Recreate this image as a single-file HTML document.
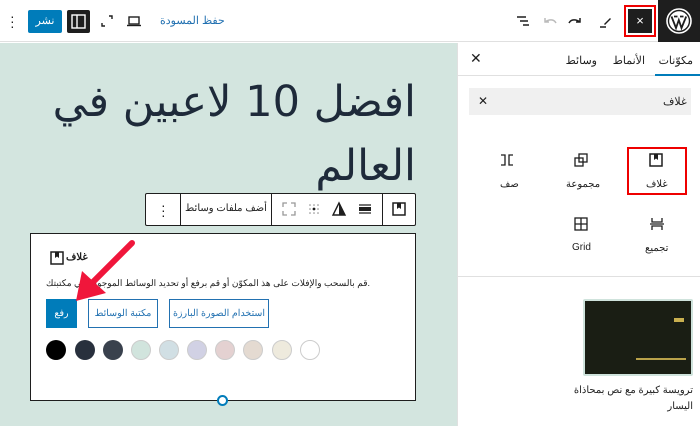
<!DOCTYPE html>
<html><head><meta charset="utf-8"><style>
*{margin:0;padding:0;box-sizing:border-box}
body{width:700px;height:426px;overflow:hidden;background:#fff;font-family:"Liberation Sans","Noto Sans CJK SC",sans-serif;position:relative;color:#1e1e1e}
.a{position:absolute}
.t{font-size:11px;white-space:nowrap;direction:rtl}
.sw{position:absolute;top:340px;width:20px;height:20px;border-radius:50%}
</style></head><body>
<!-- header -->
<div class="a" style="left:0;top:0;width:700px;height:42px;border-bottom:1px solid #e0e0e0;background:#fff"></div>
<div class="a" style="left:658px;top:0;width:42px;height:42px;background:#1e1e1e"></div>
<svg class="a" style="left:665px;top:7px" width="28" height="28" viewBox="0 0 28 28"><circle cx="14" cy="14" r="12" fill="none" stroke="#fff" stroke-width="1.6"/><circle cx="14" cy="14" r="9.8" fill="#fff"/><path d="M6.5 9.5 L11 21 L13.8 13 L16.5 21 L21.2 9.5 M9 9.5h3.5 M15 9.5h3.5" stroke="#1e1e1e" stroke-width="1.8" fill="none"/></svg>
<div class="a" style="left:624px;top:5px;width:32px;height:32px;border:2px solid #e00"></div>
<div class="a" style="left:628px;top:9px;width:24px;height:24px;background:#1e1e1e;color:#fff;font-size:13px;text-align:center;line-height:24px">×</div>
<svg class="a" style="left:596px;top:12px" width="18" height="18" viewBox="0 0 18 18"><path d="M4 15h6" stroke="#1e1e1e" stroke-width="1.5"/><path d="M8 12l6-6 1 1-6 6z" fill="#1e1e1e"/></svg>
<svg class="a" style="left:566px;top:12px" width="18" height="18" viewBox="0 0 18 18"><path d="M3 11c2-4 7-4 11-1M14 6v4h-4" stroke="#1e1e1e" stroke-width="1.5" fill="none"/></svg>
<svg class="a" style="left:541px;top:12px" width="18" height="18" viewBox="0 0 18 18"><path d="M15 11c-2-4-7-4-11-1M4 6v4h4" stroke="#bbb" stroke-width="1.5" fill="none"/></svg>
<svg class="a" style="left:514px;top:12px" width="18" height="18" viewBox="0 0 18 18"><path d="M3 5h9M6 9h8M9 13h6" stroke="#1e1e1e" stroke-width="1.5"/></svg>
<div class="a t" style="left:160px;top:14px;color:#2271b1">حفظ المسودة</div>
<svg class="a" style="left:126px;top:13px" width="16" height="16" viewBox="0 0 16 16"><rect x="3" y="4" width="10" height="7" fill="none" stroke="#1e1e1e" stroke-width="1.4"/><path d="M1 12.5h14" stroke="#1e1e1e" stroke-width="1.4"/></svg>
<svg class="a" style="left:99px;top:13px" width="16" height="16" viewBox="0 0 16 16"><path d="M10 3h3v3M6 13H3v-3" stroke="#1e1e1e" stroke-width="1.4" fill="none"/></svg>
<div class="a" style="left:67px;top:10px;width:23px;height:23px;background:#1e1e1e;border-radius:2px"></div>
<svg class="a" style="left:71px;top:14px" width="15" height="15" viewBox="0 0 15 15"><rect x="1" y="1" width="13" height="13" fill="none" stroke="#fff" stroke-width="1.4"/><path d="M6 1v13" stroke="#fff" stroke-width="1.4"/></svg>
<div class="a t" style="left:28px;top:10px;width:34px;height:23px;background:#007cba;color:#fff;border-radius:2px;text-align:center;line-height:23px">نشر</div>
<div class="a" style="left:10px;top:14px;width:3px;font-size:14px;line-height:5px;color:#1e1e1e">·<br>·<br>·</div>
<!-- canvas -->
<div class="a" style="left:0;top:43px;width:458px;height:383px;background:#d3e5df"></div>
<div class="a" style="left:457px;top:43px;width:1px;height:383px;background:#e0e0e0"></div>
<div class="a" style="left:40px;top:70px;width:376px;direction:rtl;text-align:right;font-family:'DejaVu Sans',sans-serif;font-size:43px;line-height:64px;color:#1e2a3a">افضل 10 لاعبين في العالم</div>
<!-- toolbar -->
<div class="a" style="left:145px;top:193px;width:271px;height:33px;background:#fff;border:1px solid #1e1e1e;border-radius:2px"></div>
<div class="a" style="left:180px;top:194px;width:1px;height:31px;background:#1e1e1e"></div>
<div class="a" style="left:271px;top:194px;width:1px;height:31px;background:#1e1e1e"></div>
<div class="a" style="left:382px;top:194px;width:1px;height:31px;background:#1e1e1e"></div>
<svg class="a" style="left:391px;top:201px" width="16" height="16" viewBox="0 0 16 16"><rect x="2" y="2" width="12" height="12" fill="none" stroke="#1e1e1e" stroke-width="1.5"/><path d="M6 2v6l2-1.5 2 1.5V2z" fill="#1e1e1e"/></svg>
<svg class="a" style="left:357px;top:201px" width="16" height="16" viewBox="0 0 16 16"><path d="M2 4h12M2 12h12" stroke="#1e1e1e" stroke-width="1.3"/><rect x="2" y="6" width="12" height="4" fill="#1e1e1e"/></svg>
<svg class="a" style="left:331px;top:201px" width="16" height="16" viewBox="0 0 16 16"><path d="M8 2L2 14h12z" fill="none" stroke="#1e1e1e" stroke-width="1.4"/><path d="M8 2v12h6z" fill="#1e1e1e"/></svg>
<svg class="a" style="left:306px;top:201px" width="16" height="16" viewBox="0 0 16 16" fill="#888"><circle cx="8" cy="8" r="1.4" fill="#1e1e1e"/><circle cx="4" cy="4" r=".8"/><circle cx="8" cy="4" r=".8"/><circle cx="12" cy="4" r=".8"/><circle cx="4" cy="8" r=".8"/><circle cx="12" cy="8" r=".8"/><circle cx="4" cy="12" r=".8"/><circle cx="8" cy="12" r=".8"/><circle cx="12" cy="12" r=".8"/></svg>
<svg class="a" style="left:281px;top:201px" width="16" height="16" viewBox="0 0 16 16"><path d="M2 6V2h4M10 2h4v4M14 10v4h-4M6 14H2v-4" stroke="#999" stroke-width="1.3" fill="none"/></svg>
<div class="a t" style="left:184px;top:203px;width:84px;text-align:center;font-size:10px">أضف ملفات وسائط</div>
<div class="a" style="left:161px;top:203px;width:3px;font-size:14px;line-height:5px">·<br>·<br>·</div>
<!-- block -->
<div class="a" style="left:30px;top:233px;width:386px;height:168px;background:#fff;border:1px solid #1e1e1e"></div>
<svg class="a" style="left:49px;top:250px" width="16" height="16" viewBox="0 0 16 16"><rect x="2" y="2" width="12" height="12" fill="none" stroke="#1e1e1e" stroke-width="1.5"/><path d="M6 2v6l2-1.5 2 1.5V2z" fill="#1e1e1e"/></svg>
<div class="a t" style="left:66px;top:252px;font-size:10px;font-weight:bold">غلاف</div>
<div class="a t" style="left:47px;top:278px;width:323px;text-align:right;font-size:9px">.قم بالسحب والإفلات على هذ المكوّن أو قم برفع أو تحديد الوسائط الموجودة في مكتبتك</div>
<div class="a t" style="left:46px;top:299px;width:31px;height:29px;background:#007cba;color:#fff;font-size:9.5px;text-align:center;line-height:29px">رفع</div>
<div class="a t" style="left:88px;top:299px;width:70px;height:29px;border:1px solid #2271b1;color:#2271b1;font-size:9.5px;text-align:center;line-height:27px">مكتبة الوسائط</div>
<div class="a t" style="left:169px;top:299px;width:100px;height:29px;border:1px solid #2271b1;color:#2271b1;font-size:9.5px;text-align:center;line-height:27px">استخدام الصورة البارزة</div>
<div class="sw" style="left:46px;background:#000"></div>
<div class="sw" style="left:75px;background:#28303d"></div>
<div class="sw" style="left:103px;background:#39414d"></div>
<div class="sw" style="left:131px;background:#d1e4dd;border:1px solid #ccc"></div>
<div class="sw" style="left:159px;background:#d1dfe4;border:1px solid #ccc"></div>
<div class="sw" style="left:187px;background:#d1d1e4;border:1px solid #ccc"></div>
<div class="sw" style="left:215px;background:#e4d1d1;border:1px solid #ccc"></div>
<div class="sw" style="left:243px;background:#e4dad1;border:1px solid #ccc"></div>
<div class="sw" style="left:272px;background:#eeeadd;border:1px solid #ccc"></div>
<div class="sw" style="left:300px;background:#fff;border:1px solid #ccc"></div>
<div class="a" style="left:217px;top:395px;width:11px;height:11px;border-radius:50%;background:#fff;border:2px solid #007cba"></div>
<svg class="a" style="left:60px;top:235px" width="90" height="75" viewBox="0 0 90 75"><path d="M72 8L28 52" stroke="#f0163b" stroke-width="6" stroke-linecap="round"/><path d="M16 66L22 36 46 58z" fill="#f0163b"/></svg>
<!-- sidebar -->
<div class="a t" style="right:7px;top:54px;font-size:11px">مكوّنات</div>
<div class="a t" style="right:55px;top:54px;font-size:11px">الأنماط</div>
<div class="a t" style="right:103px;top:54px;font-size:11px">وسائط</div>
<div class="a" style="left:470px;top:50px;font-size:14px">✕</div>
<div class="a" style="left:458px;top:75px;width:242px;height:1px;background:#e0e0e0"></div>
<div class="a" style="left:655px;top:74px;width:45px;height:2px;background:#007cba"></div>
<div class="a" style="left:469px;top:88px;width:222px;height:27px;background:#f0f0f0"></div>
<div class="a t" style="left:663px;top:95px;font-size:11px">غلاف</div>
<div class="a" style="left:478px;top:94px;font-size:12px">✕</div>
<div class="a" style="left:627px;top:147px;width:60px;height:48px;border:2px solid #e00"></div>
<svg class="a" style="left:648px;top:152px" width="16" height="16" viewBox="0 0 16 16"><rect x="2" y="2" width="12" height="12" fill="none" stroke="#1e1e1e" stroke-width="1.5"/><path d="M6 2v6l2-1.5 2 1.5V2z" fill="#1e1e1e"/></svg>
<div class="a t" style="left:646px;top:179px;font-size:10px">غلاف</div>
<svg class="a" style="left:573px;top:152px" width="16" height="16" viewBox="0 0 16 16"><rect x="2" y="6" width="8" height="8" fill="none" stroke="#1e1e1e" stroke-width="1.3"/><rect x="6" y="2" width="8" height="8" fill="none" stroke="#1e1e1e" stroke-width="1.3"/></svg>
<div class="a t" style="left:566px;top:179px;font-size:10px">مجموعة</div>
<svg class="a" style="left:499px;top:152px" width="16" height="16" viewBox="0 0 16 16"><path d="M2 3h4v10H2M14 3h-4v10h4" stroke="#1e1e1e" stroke-width="1.3" fill="none"/></svg>
<div class="a t" style="left:500px;top:179px;font-size:10px">صف</div>
<svg class="a" style="left:649px;top:216px" width="16" height="16" viewBox="0 0 16 16"><path d="M3 2v4h10V2M3 14v-4h10v4M1 8h14" stroke="#1e1e1e" stroke-width="1.3" fill="none"/></svg>
<div class="a t" style="left:645px;top:243px;font-size:10px">تجميع</div>
<svg class="a" style="left:573px;top:216px" width="16" height="16" viewBox="0 0 16 16"><rect x="2" y="2" width="12" height="12" fill="none" stroke="#1e1e1e" stroke-width="1.3"/><path d="M8 2v12M2 8h12" stroke="#1e1e1e" stroke-width="1.3"/></svg>
<div class="a" style="left:572px;top:242px;font-size:10px">Grid</div>
<div class="a" style="left:458px;top:276px;width:242px;height:1px;background:#e0e0e0"></div>
<div class="a" style="left:583px;top:299px;width:110px;height:77px;background:#1a1e14;border:2px solid #cfe3dc;border-radius:2px"></div>
<div class="a" style="left:636px;top:358px;width:50px;height:2px;background:#b9a24a"></div>
<div class="a" style="left:674px;top:318px;width:10px;height:4px;background:#c9b050"></div>
<div class="a t" style="left:570px;top:383px;width:123px;text-align:right;font-size:10px;line-height:16px;white-space:normal">ترويسة كبيرة مع نص بمحاذاة اليسار</div>
</body></html>
